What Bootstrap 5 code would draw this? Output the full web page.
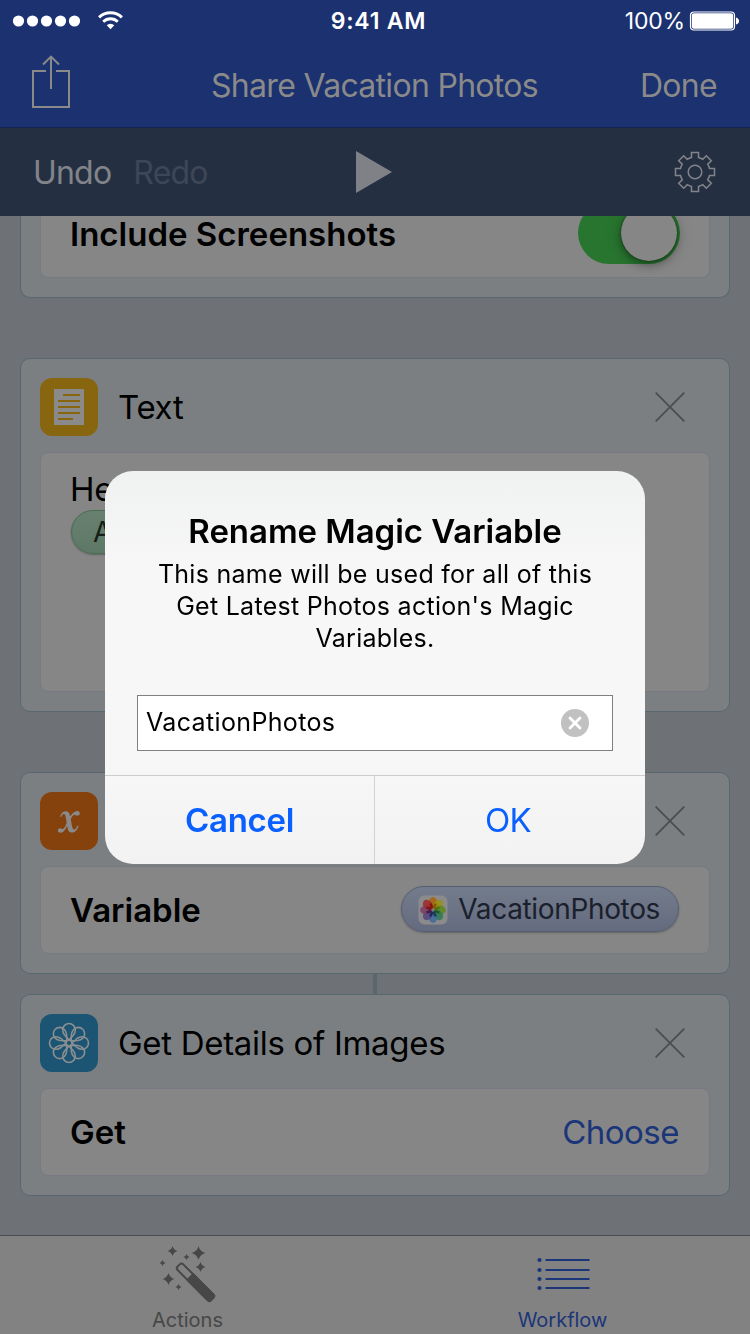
<!DOCTYPE html>
<html lang="en">
<head>
<meta charset="utf-8">
<meta name="viewport" content="width=device-width, initial-scale=1">
<title>Share Vacation Photos</title>
<link href="https://cdn.jsdelivr.net/npm/bootstrap@5.3.0/dist/css/bootstrap.min.css" rel="stylesheet">
<style>
  body { font-family: Inter, "Liberation Sans", sans-serif; font-size: 33px; line-height: 1.2; color: #000; background: #6e7277; letter-spacing: -.3px; }
  svg { display: block; flex: none; }
  .fw-semi { font-weight: 600; letter-spacing: 0; }
  .topbar { height: 128px; background: #1b3170; border-bottom: 1px solid #152350; color: #8a8a8a; }
  .statusbar { height: 41px; font-size: 23px; color: #fff; padding: 2px 11px 0 18px; }
  .signal { margin: -2px 0 0 0; }
  .signal-dots { margin-left: -6px; }
  .clock { font-weight: 600; letter-spacing: .75px; }
  .percent { letter-spacing: -.2px; }
  .navrow { height: 86px; font-size: 32px; padding: 4px 33px 0 32px; letter-spacing: -.7px; }
  .share { margin-top: -9px; }
  .toolbar { height: 88px; background: #243042; color: #828489; font-size: 32px; padding: 0 34px 0 33px; letter-spacing: -.8px; }
  .redo { color: #3d4757; margin-left: 22px; }
  .toolbar-label { padding-top: 2px; }
  .play { margin-left: -1px; }
  .flow { height: 1019px; }
  .step { margin: 0 20px; padding: 19px; background: #7b7f82; border: 1px solid #586870; border-radius: 10px; }
  .step-head { height: 58px; margin-bottom: 16px; padding-right: 25px; }
  .step-head .tile { margin-right: 20px; }
  .step-title { padding-top: 2px; }
  .tile { width: 58px; height: 58px; border-radius: 12px; }
  .panel { min-height: 88px; background: #868686; border: 1px solid #777b81; border-radius: 8px; padding: 0 30px 0 29px; }
  .panel-row { padding-top: 1px; }
  .pill { height: 46px; border-radius: 23px; border: 1px solid #565e72; background: linear-gradient(#737c8c, #646b7f); box-shadow: 0 1px 2px #0004; font-size: 28px; color: #1a202c; letter-spacing: -.35px; padding: 1px 18px 0 16px; margin-top: -3px; }
  .pill-green { background: linear-gradient(#688070, #5e7866); border-color: #4a6c54; width: 200px; height: 44px; padding: 2px 0 0 21px; margin: 0 0 0 1px; color: #152019; }
  .toggle { width: 102px; height: 62px; border-radius: 31px; background: #28752f; padding: 3px; margin-right: -1px; }
  .knob { width: 56px; height: 56px; border-radius: 50%; background: #868686; box-shadow: 0 0 2px #0008, 0 4px 8px #0005, 0 0 18px #0002; }
  .link-dim { color: #1b3579; letter-spacing: -.5px; padding-top: 1px; }
  .joint { width: 4px; height: 20px; background: #5a686e; }
  .tabs { height: 99px; background: #828282; border-top: 1px solid #4c4e51; font-size: 20px; color: #474747; letter-spacing: 0; }
  .tabs svg { margin-top: 9px; margin-bottom: 3px; }
  .tabs .tab-on { color: #1b3579; }
  .alertbox { width: 540px; height: 393px; border-radius: 28px; background: linear-gradient(#f0f1f1, #f7f7f7 25%, #f7f7f7 75%, #f2f2f3); overflow: hidden; margin-top: 1px; }
  .alert-body { height: 304px; padding: 40px 32px 24px; }
  .alert-msg { font-size: 25px; line-height: 32px; letter-spacing: .28px; margin-top: 6px; }
  .field { height: 56px; background: #fff; border: 1px solid #808080; font-size: 25px; letter-spacing: .35px; padding: 0 22px 2px 8px; }
  .alert-btns { height: 89px; border-top: 1px solid #cbcccd; color: #0a60ff; }
  .alert-btns > * { padding-top: 1px; }
  .alert-btns > :first-child { border-right: 1px solid #cfd2d8; letter-spacing: -.3px; }
</style>
</head>
<body class="vh-100 overflow-hidden">
<svg width="0" height="0" class="position-absolute"><defs>
  <g id="cross"><path d="M.7.7l28.6 28.6M29.3.7L.7 29.3" fill="none" stroke="#4d4d4d" stroke-width="1.8"/></g>
  <path id="petal" d="M0-3L-4.500-8Q-6.300-10.500-6.300-13.200A6.300 6.300 0 0 1 6.300-13.200Q6.300-10.500 4.500-8Z"/>
  <path id="spark" d="M0-1Q.22-.22 1 0Q.22.22 0 1Q-.22.22-1 0Q-.22-.22 0-1Z"/>
</defs></svg>

<header class="topbar">
  <div class="statusbar row g-0 align-items-center">
    <div class="col d-flex align-items-center signal">
      <svg class="signal-dots" width="100" height="20" viewBox="0 0 100 20" fill="#fff">
        <circle cx="6.500" cy="10" r="5.600"/><circle cx="20.500" cy="10" r="5.600"/><circle cx="34.500" cy="10" r="5.600"/><circle cx="48.500" cy="10" r="5.600"/><circle cx="62.500" cy="10" r="5.600"/>
      </svg>
      <svg width="26" height="20" viewBox="0 0 26 20" fill="none" stroke="#fff" style="margin-left:-14px">
        <path d="M1.100 6.400A16.500 16.500 0 0 1 23.900 6.400" stroke-width="3"/><path d="M5.200 10.700A10.500 10.500 0 0 1 19.800 10.700" stroke-width="2.800"/><path d="M12.500 18.300L8.700 14.300A5.400 5.400 0 0 1 16.300 14.300Z" fill="#fff" stroke="none"/>
      </svg>
    </div>
    <div class="col-auto clock">9:41 AM</div>
    <div class="col d-flex align-items-center justify-content-end">
      <span class="percent me-1">100%</span>
      <svg width="50" height="20" viewBox="0 0 50 20" style="margin-top:-2px"><rect x="1.500" y="1" width="44" height="18" rx="3.500" fill="none" stroke="#fff" stroke-width="1.200"/><rect x="2.800" y="2.300" width="41.400" height="15.400" rx="2.200" fill="#fff"/><path d="M47 6.500Q50 7.500 50 10T47 13.500Z" fill="#fff"/></svg>
    </div>
  </div>
  <div class="navrow row g-0 align-items-center">
    <div class="col"><svg class="share" width="38" height="54" viewBox="0 0 38 54" fill="none" stroke="#8a8a8a" stroke-width="2"><path d="M14 16H1V52H37V16H24M19 34V2M11 9.500L19 1.600L27 9.500"/></svg></div>
    <div class="col-auto">Share Vacation Photos</div>
    <div class="col text-end">Done</div>
  </div>
</header>

<div class="toolbar row g-0 align-items-center">
  <div class="col toolbar-label">Undo<span class="redo">Redo</span></div>
  <div class="col-auto play"><svg width="36" height="42" viewBox="0 0 36 42" fill="#808186"><path d="M0 0L36 21L0 42Z"/></svg></div>
  <div class="col d-flex justify-content-end">
    <svg width="42" height="42" viewBox="-21 -21 42 42" fill="none" stroke="#828489" stroke-width="1.500">
      <path d="M-3.500-14.500V-19.500H3.500V-14.500A15 15 0 0 1 7.800-12.700L11.300-16.300L16.300-11.300L12.700-7.800A15 15 0 0 1 14.500-3.500H19.500V3.500H14.500A15 15 0 0 1 12.700 7.800L16.300 11.300L11.300 16.300L7.800 12.700A15 15 0 0 1 3.500 14.500V19.500H-3.500V14.500A15 15 0 0 1-7.800 12.700L-11.300 16.300L-16.300 11.300L-12.700 7.800A15 15 0 0 1-14.500 3.500H-19.500V-3.500H-14.500A15 15 0 0 1-12.700-7.800L-16.300-11.300L-11.300-16.300L-7.800-12.700A15 15 0 0 1-3.500-14.500Z"/><circle r="6.800"/>
    </svg>
  </div>
</div>

<main class="flow overflow-hidden d-flex flex-column">
  <section class="step border-top-0 rounded-top-0 pt-0" style="margin-bottom:60px">
    <div class="panel border-top-0 rounded-top-0 d-flex align-items-end justify-content-between" style="height:62px;min-height:0;padding-bottom:13px">
      <span class="fw-semi lh-1" style="margin-bottom:13px">Include Screenshots</span>
      <div class="toggle d-flex justify-content-end"><div class="knob"></div></div>
    </div>
  </section>

  <section class="step" style="margin-bottom:60px">
    <div class="step-head d-flex align-items-center">
      <svg class="tile" viewBox="0 0 58 58"><rect width="58" height="58" fill="#88660f"/><path d="M14 11H44V47H14Z" fill="#8a8a8a"/><path d="M23 17H40M18 23H40M18 29H40M18 35H40M18 41H33" stroke="#88660f" stroke-width="2"/></svg>
      <span class="flex-grow-1 step-title">Text</span>
      <svg width="30" height="30"><use href="#cross"/></svg>
    </div>
    <div class="panel" style="height:240px;padding-top:17px">
      <div>He</div>
      <div class="pill pill-green d-flex align-items-center">A</div>
    </div>
  </section>

  <section class="step">
    <div class="step-head d-flex align-items-center justify-content-between">
      <svg class="tile" viewBox="0 0 58 58"><rect width="58" height="58" fill="#86420d"/><path d="M20 24.500C21 21 23.500 19.200 26 19.200C29 19.200 29.800 22 30.200 24.600C32 21.500 34.500 19 37.300 19C40.500 19 40.700 23.300 37.800 23.600C36 23.800 35.500 22.600 34.500 22.700C33 23 31.500 25 30.800 27.200L31.800 33C32.300 36 33 37.600 34.300 37.500C35.800 37.400 36.500 35.500 37.400 33.600L38.600 34.200C37.200 37.800 35 40.600 32 40.600C29 40.600 28 38.500 27.500 35.500L27.200 33.500C25.500 37.500 23.500 40.700 20.500 40.700C17.200 40.700 17 36.400 20 36.200C21.500 36.200 22 37.100 22.900 37C24.300 36.700 25.800 33.500 26.700 30.700L25.800 25.300C25.300 22.700 25 22 24 22C22.700 22 21.900 23.200 21.200 25Z" fill="#8a8a8a"/></svg>
      <svg width="30" height="30"><use href="#cross"/></svg>
    </div>
    <div class="panel panel-row d-flex align-items-center justify-content-between">
      <span class="fw-semi">Variable</span>
      <span class="pill d-flex align-items-center">
        <svg width="30" height="30" viewBox="-15 -15 30 30" style="margin-right:10px"><rect x="-14.500" y="-14.500" width="29" height="29" rx="6" fill="#8b8b8c"/>
          <g fill-opacity=".88">
            <ellipse cy="-7.300" rx="4.300" ry="5.600" fill="#a8640c"/>
            <ellipse cy="-7.300" rx="4.300" ry="5.600" fill="#989013" transform="rotate(45)"/>
            <ellipse cy="-7.300" rx="4.300" ry="5.600" fill="#5c8622" transform="rotate(90)"/>
            <ellipse cy="-7.300" rx="4.300" ry="5.600" fill="#2f7a52" transform="rotate(135)"/>
            <ellipse cy="-7.300" rx="4.300" ry="5.600" fill="#406b9c" transform="rotate(180)"/>
            <ellipse cy="-7.300" rx="4.300" ry="5.600" fill="#54457c" transform="rotate(225)"/>
            <ellipse cy="-7.300" rx="4.300" ry="5.600" fill="#7c3f62" transform="rotate(270)"/>
            <ellipse cy="-7.300" rx="4.300" ry="5.600" fill="#9c2a2e" transform="rotate(315)"/>
          </g>
          <g stroke-width="2.600">
            <path d="M-.7-1.500L-2.600-6.400" stroke="#8d1408"/><path d="M.7-1.500L2.600-6.400" stroke="#8a5206"/><path d="M1.500-.7L6.400-2.600" stroke="#56700c"/><path d="M1.500.7L6.400 2.600" stroke="#1f5a2a"/><path d="M.7 1.500L2.600 6.400" stroke="#143f4f"/><path d="M-.7 1.500L-2.600 6.400" stroke="#1d2a60"/><path d="M-1.500.7L-6.400 2.600" stroke="#3f1d50"/><path d="M-1.500-.7L-6.400-2.600" stroke="#7b1320"/>
          </g><circle r="1" fill="#777"/></svg>VacationPhotos</span>
    </div>
  </section>
  <div class="joint mx-auto"></div>
  <section class="step">
    <div class="step-head d-flex align-items-center">
      <svg class="tile" viewBox="-29 -29 58 58"><rect x="-29" y="-29" width="58" height="58" fill="#1c5473"/><g fill="none" stroke="#8a8f91" stroke-width="1.600"><circle r="3"/><use href="#petal"/><use href="#petal" transform="rotate(45)"/><use href="#petal" transform="rotate(90)"/><use href="#petal" transform="rotate(135)"/><use href="#petal" transform="rotate(180)"/><use href="#petal" transform="rotate(225)"/><use href="#petal" transform="rotate(270)"/><use href="#petal" transform="rotate(315)"/></g></svg>
      <span class="flex-grow-1 step-title">Get Details of Images</span>
      <svg width="30" height="30"><use href="#cross"/></svg>
    </div>
    <div class="panel panel-row d-flex align-items-center justify-content-between">
      <span class="fw-semi">Get</span>
      <span class="link-dim">Choose</span>
    </div>
  </section>
</main>

<nav class="tabs row g-0 text-center">
  <div class="col d-flex flex-column align-items-center">
    <svg width="60" height="60" viewBox="0 0 60 60" fill="#474747">
      <g transform="translate(20.800 20.300) rotate(45)"><rect x="0" y="-3.800" width="46" height="8" rx="2.500" fill="none" stroke="#474747" stroke-width="2"/><path d="M15.500-4.800H45.500Q48.500-4.800 48.500-1.800V2.200Q48.500 5.200 45.500 5.200H15.500Z"/></g>
      <use href="#spark" transform="translate(14.500 6) scale(5)"/><use href="#spark" transform="translate(40.500 8) scale(6.800)"/><use href="#spark" transform="translate(28.500 12) scale(3)"/><use href="#spark" transform="translate(4.500 18) scale(3)"/><use href="#spark" transform="translate(42.500 22) scale(5)"/><use href="#spark" transform="translate(10.500 34) scale(6)"/><use href="#spark" transform="translate(20.500 42) scale(3)"/>
    </svg>
    <span>Actions</span>
  </div>
  <div class="col tab-on d-flex flex-column align-items-center">
    <svg width="54" height="60" viewBox="0 0 54 60" fill="#1b3579"><path d="M9.500 15H53.500M9.500 25H53.500M9.500 34H53.500M9.500 43H53.500" stroke="#1b3579" stroke-width="2"/><circle cx="3.500" cy="15" r="2.100"/><circle cx="3.500" cy="25" r="2.100"/><circle cx="3.500" cy="34" r="2.100"/><circle cx="3.500" cy="43" r="2.100"/></svg>
    <span>Workflow</span>
  </div>
</nav>

<div class="position-fixed top-0 start-0 w-100 h-100 d-flex align-items-center justify-content-center">
  <div class="alertbox" role="dialog">
    <div class="alert-body d-flex flex-column text-center">
      <div class="fw-semi lh-sm text-nowrap" style="letter-spacing:-.05px">Rename Magic Variable</div>
      <div class="alert-msg">This name will be used for all of this<br>Get Latest Photos action's Magic<br>Variables.</div>
      <div class="field mt-auto d-flex align-items-center justify-content-between">
        <span>VacationPhotos</span>
        <svg width="30" height="30" viewBox="-15 -15 30 30" style="margin-top:2px"><circle r="14" fill="#c1c1c1"/><path d="M-5-5L5 5M5-5L-5 5" stroke="#fff" stroke-width="2.800" stroke-linecap="round"/></svg>
      </div>
    </div>
    <div class="alert-btns row g-0 text-center">
      <div class="col-6 d-flex align-items-center justify-content-center fw-semi">Cancel</div>
      <div class="col-6 d-flex align-items-center justify-content-center" style="letter-spacing:-.8px"><span class="me-1">OK</span></div>
    </div>
  </div>
</div>
<script src="https://cdn.jsdelivr.net/npm/bootstrap@5.3.0/dist/js/bootstrap.bundle.min.js"></script>
</body>
</html>
